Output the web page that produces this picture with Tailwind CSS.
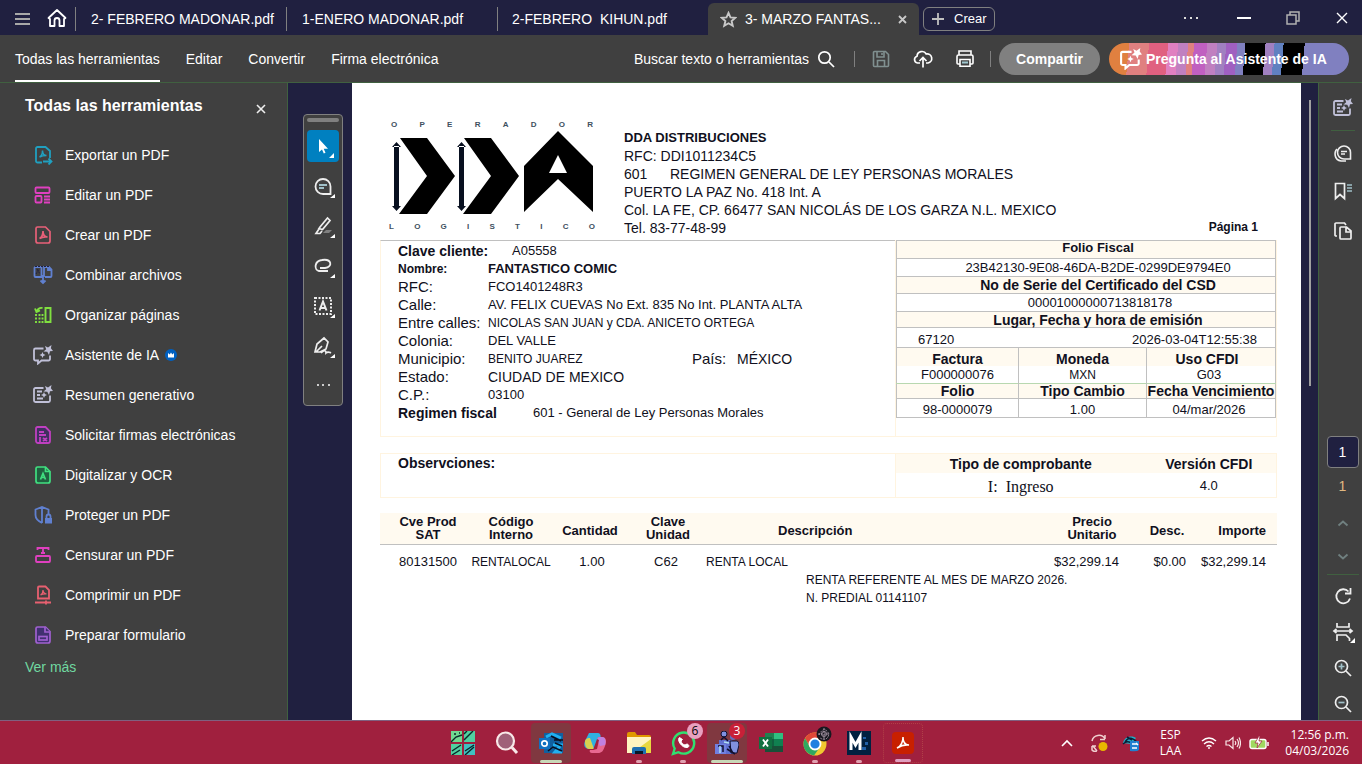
<!DOCTYPE html>
<html lang="es">
  <head>
    <meta charset="UTF-8" />
    <meta name="viewport" content="width=device-width, initial-scale=1.0" />
    <title>3- MARZO FANTASTICO.pdf</title>
    <script src="https://cdn.jsdelivr.net/npm/@tailwindcss/browser@4"></script>
  </head>
  <body
    class="h-screen flex flex-col overflow-hidden bg-[#202040] text-sm text-white font-['Liberation_Sans',Arial,sans-serif]"
  >
    <!-- shared icon shapes -->
    <svg class="hidden">
      <symbol id="page" viewBox="0 0 20 20">
        <path d="M4.500 2h8L17 6.500V16a2 2 0 0 1-2 2H5a2 2 0 0 1-2-2V3.500A1.500 1.500 0 0 1 4.500 2z" />
      </symbol>
      <symbol id="acro" viewBox="0 0 20 20">
        <path d="M6.500 13.500c2-1 3.500-4 3.500-7.500 0 4 2 6 4.500 6-3-.5-5.500 0-8 1.500z" />
      </symbol>
      <symbol id="spark" viewBox="0 0 20 20">
        <path d="m12 1 3 1.500L18.500 0l-.6 3.200L20 6l-3 .3L16 10l-1.700-3.200L10.500 6.500l2.700-2.300z" fill="currentColor" stroke="none" />
      </symbol>
      <symbol id="chat-ai" viewBox="0 0 20 20">
        <path d="M10.500 3.500h-8A1.500 1.500 0 0 0 1 5v9a1.500 1.500 0 0 0 1.500 1.500H5v3l3.500-3h7A1.500 1.500 0 0 0 17 14v-3.500" />
        <path d="m9.500 7 .9 2.100 2.100.9-2.100.9-.9 2.100-.9-2.100-2.100-.9 2.100-.9z" fill="currentColor" stroke="none" />
        <use href="#spark" />
      </symbol>
      <symbol id="summary-ai" viewBox="0 0 20 20">
        <path d="M10.500 3h-8A1.500 1.500 0 0 0 1 4.500v11A1.500 1.500 0 0 0 2.500 17h13a1.500 1.500 0 0 0 1.500-1.500v-5M4 6.500h5M4 10h3M4 13.500h6" />
        <path d="m11 7 .9 2.100 2.100.9-2.100.9-.9 2.100-.9-2.100L8 10l2.100-.9z" fill="currentColor" stroke="none" />
        <use href="#spark" />
      </symbol>
    </svg>

    <!-- window tabs -->
    <header class="h-[35px] shrink-0 flex items-end">
      <div class="w-[75px] h-full shrink-0 flex items-center gap-4 pl-[14px]">
        <button aria-label="Menú">
          <svg class="size-4" fill="none" stroke="#a8a8a8" stroke-width="2"><path d="M1 4h15M1 9h15M1 14h15" /></svg>
        </button>
        <button aria-label="Inicio">
          <svg class="size-[22px]" viewBox="0 0 22 22" fill="none" stroke="#fff" stroke-width="1.800" stroke-linejoin="round"><path d="M2.500 11 11 3l8.500 8-1.500 1v7h-4.500v-5.500a2 2 0 0 0-5 0V19H4v-7z" /></svg>
        </button>
      </div>
      <nav class="h-full flex items-end">
        <button class="w-[211px] h-full flex items-center pt-0.5"><span class="h-6 w-px bg-[#808080] mr-[15px]"></span>2- FEBRERO MADONAR.pdf</button>
        <button class="w-[211px] h-full flex items-center pt-0.5"><span class="h-6 w-px bg-[#808080] mr-[15px]"></span>1-ENERO MADONAR.pdf</button>
        <button class="w-[211px] h-full flex items-center pt-0.5"><span class="h-6 w-px bg-[#808080] mr-[14px]"></span>2-FEBRERO&nbsp; KIHUN.pdf</button>
        <div class="w-[211px] h-8 flex items-center rounded-t-md bg-[#404040] pl-3 pr-3">
          <svg class="size-[17px] mr-2" viewBox="0 0 18 18" fill="none" stroke="#c8c8c8" stroke-width="2"><path d="m9 2 2.100 4.700 5 .5-3.800 3.400 1.200 5L9 13l-4.500 2.600 1.200-5L1.900 7.200l5-.5z" /></svg>
          <span class="whitespace-nowrap">3- MARZO FANTAS...</span>
          <button class="ml-auto" aria-label="Cerrar pestaña">
            <svg class="size-[9px]" stroke="#c8c8c8" stroke-width="1.800"><path d="m1 1 7 7M8 1 1 8" /></svg>
          </button>
        </div>
      </nav>
      <button class="ml-1 mb-1 h-6 flex items-center gap-[10px] rounded-md border border-[#808080] pl-2 pr-[7px] text-[13px]">
        <svg class="size-3" stroke="#c0c0c0" stroke-width="1.800"><path d="M6 0v12M0 6h12" /></svg>
        Crear
      </button>
      <div class="ml-auto h-full flex items-center pr-[14px]">
        <button class="mr-[38px]" aria-label="Más"><svg class="w-4 h-1" fill="#ddd"><path d="M1 1h2v2H1zM7 1h2v2H7zM13 1h2v2h-2z" /></svg></button>
        <button class="mr-[35px]" aria-label="Minimizar"><svg class="w-[14px] h-[2px]"><path d="M0 0h14v2H0z" fill="#fff" /></svg></button>
        <button class="mr-[36px]" aria-label="Restaurar"><svg class="size-[14px]" fill="none" stroke="#b0b0b0" stroke-width="1.500"><path d="M1 4h9v9H1zM4 4V1h9v9h-3" /></svg></button>
        <button aria-label="Cerrar"><svg class="size-3" stroke="#fff" stroke-width="1.400"><path d="m1 1 10 10M11 1 1 11" /></svg></button>
      </div>
    </header>

    <!-- main menu bar -->
    <div class="h-12 shrink-0 flex items-center bg-[#404040] border-b border-[#406040] pl-[15px] pr-[13px]">
      <nav class="h-full flex gap-[26px]">
        <button class="border-y-2 border-t-transparent border-b-white">Todas las herramientas</button>
        <button>Editar</button>
        <button>Convertir</button>
        <button>Firma electrónica</button>
      </nav>
      <div class="ml-auto flex items-center">
        <button class="flex items-center gap-2">
          Buscar texto o herramientas
          <svg class="size-[18px]" fill="none" stroke="#fff" stroke-width="1.700"><circle cx="7.500" cy="7.500" r="5.700" /><path d="m12 12 5 5" /></svg>
        </button>
        <span class="w-px h-4 bg-[#808080] ml-[19px] mr-[17px]"></span>
        <button aria-label="Guardar">
          <svg class="size-[18px]" viewBox="0 0 18 18" fill="none" stroke="#809090" stroke-width="1.600"><path d="M1.500 2.500a1 1 0 0 1 1-1h11l3 3v11a1 1 0 0 1-1 1h-13a1 1 0 0 1-1-1zM5 1.500V7h7V1.500M5.500 16v-5.500h7V16M10 3v2" /></svg>
        </button>
        <button class="ml-[23px]" aria-label="Subir">
          <svg class="size-5" viewBox="0 0 20 20" fill="none" stroke="#fff" stroke-width="1.700"><path d="M7 14H4.500A3.500 3.500 0 0 1 4 7.200 5 5 0 0 1 13.300 5 4.500 4.500 0 0 1 15 14h-2M10 18.500V9M6.500 12 10 8.500l3.500 3.500" /></svg>
        </button>
        <button class="ml-[22px]" aria-label="Imprimir">
          <svg class="size-5" viewBox="0 0 20 20" fill="none" stroke="#fff" stroke-width="1.600"><path d="M4 6V2h12v4M5 15H3a1 1 0 0 1-1-1V7.500A1.500 1.500 0 0 1 3.500 6h13A1.500 1.500 0 0 1 18 7.500V14a1 1 0 0 1-1 1h-2" /><path d="M5 10.500h10v6.700H5z" /><path d="M7 13.500h6" stroke="#a0c8d0" stroke-width="2" /></svg>
        </button>
        <span class="w-px h-4 bg-[#808080] ml-[15px] mr-2"></span>
        <button class="h-8 rounded-full bg-[#808080] px-[17px] font-bold">Compartir</button>
        <button
          class="ml-[9px] w-[240px] h-8 flex items-center gap-1 whitespace-nowrap rounded-full pl-[11px] font-bold bg-[linear-gradient(95deg,#e08040_20px,#e08080_20px_40px,#e06080_40px_59px,#e080c0_59px_69px,#c080c0_69px_79px,#e08080_79px_85px,#c060c0_85px_98px,#c080c0_98px_108px,#a080c0_108px_117px,#a060c0_117px_128px,#8080c0_128px_136px,#000_136px_156px,#a080c0_156px_165px,#6080c0_165px_174px,#000_174px_195px,#8080c0_195px)]"
        >
          <svg class="size-[22px] shrink-0" viewBox="0 0 20 20" fill="none" stroke="currentColor" stroke-width="1.900"><use href="#chat-ai" /></svg>
          Pregunta al Asistente de IA
        </button>
      </div>
    </div>

    <main class="flex-1 min-h-0 flex">
      <!-- tool list -->
      <aside class="w-72 shrink-0 bg-[#404040] border-r border-[#406040]">
        <div class="h-[52px] flex justify-between pl-[25px] pr-[21px] pt-[13px]">
          <h2 class="text-base leading-5 font-bold">Todas las herramientas</h2>
          <button class="self-start mt-2" aria-label="Cerrar panel"><svg class="size-[10px]" stroke="#eee" stroke-width="1.600"><path d="m1 1 8 8M9 1 1 9" /></svg></button>
        </div>
        <ul>
          <li>
            <button class="h-10 flex items-center gap-3 pl-[33px]">
              <svg class="size-5" viewBox="0 0 20 20" fill="none" stroke="#20a0c0" stroke-width="1.800"><path d="M9 17.500H4.500A1.500 1.500 0 0 1 3 16V3.500A1.500 1.500 0 0 1 4.500 2h8L17 6v7M10 16.500h9M15.500 13.500l3 3-3 3" /><path d="M6.500 12c2-1 3-3.500 3-6.500 0 3.500 1.500 5 4 5-2.500 0-5 .5-7 1.500z" stroke-width="1.500" /></svg>
              Exportar un PDF
            </button>
          </li>
          <li>
            <button class="h-10 flex items-center gap-3 pl-[33px]">
              <svg class="size-5" viewBox="0 0 20 20" fill="none" stroke="#e040c0" stroke-width="1.800"><rect x="2.500" y="2.500" width="14" height="5.500" rx="1" /><rect x="2.500" y="11" width="6" height="6.500" rx="1" /><path d="M11 11.500h6M11 14.500h6M11 17.500h6" /></svg>
              Editar un PDF
            </button>
          </li>
          <li>
            <button class="h-10 flex items-center gap-3 pl-[33px]">
              <svg class="size-5" fill="none" stroke="#e86078" stroke-width="1.700"><use href="#page" /><use href="#acro" /></svg>
              Crear un PDF
            </button>
          </li>
          <li>
            <button class="h-10 flex items-center gap-3 pl-[33px]">
              <svg class="size-5" viewBox="0 0 20 20" fill="none" stroke="#6080d0" stroke-width="1.800"><path d="M7.500 12H2.500a1 1 0 0 1-1-1V3a1 1 0 0 1 1-1h6v10zM12 12h5.500a1 1 0 0 0 1-1V4.500L16 2h-5v10M10 10v8M7.500 15.500 10 18l2.500-2.500M15 2v3h3" /><path d="m3 9 3-5M4 4l3 5M2 1.500h15" stroke="#202040" stroke-width="1" stroke-dasharray="2 1" /></svg>
              Combinar archivos
            </button>
          </li>
          <li>
            <button class="h-10 flex items-center gap-3 pl-[33px]">
              <svg class="size-5" viewBox="0 0 20 20" fill="none" stroke="#80e040" stroke-width="1.900"><path d="M12.500 3h5v14h-5z" /><path d="M9.500 3C7 2.500 5 3.500 4 6M2 3.500 3.500 7 7 5.500" /><path d="M3 9v9M6.500 9v9M9.500 9v9" stroke-dasharray="2 1.500" /></svg>
              Organizar páginas
            </button>
          </li>
          <li>
            <button class="h-10 flex items-center gap-3 pl-[33px]">
              <svg class="size-5 text-[#c0c0d8]" fill="none" stroke="currentColor" stroke-width="1.800"><use href="#chat-ai" /></svg>
              Asistente de IA
              <svg class="size-3 -ml-1.5" viewBox="0 0 12 12"><circle cx="6" cy="6" r="6" fill="#0060c0" /><path d="m3 4 1.700 1.500L6 3.500l1.300 2L9 4v4.500H3z" fill="#fff" /></svg>
            </button>
          </li>
          <li>
            <button class="h-10 flex items-center gap-3 pl-[33px]">
              <svg class="size-5 text-[#c0c0d8]" fill="none" stroke="currentColor" stroke-width="1.800"><use href="#summary-ai" /></svg>
              Resumen generativo
            </button>
          </li>
          <li>
            <button class="h-10 flex items-center gap-3 pl-[33px]">
              <svg class="size-5" fill="#403060" stroke="#c040c0" stroke-width="1.800"><use href="#page" /><path d="M6 7h5M6 10h7M7 12v5M10 13l4 3M14 13l-4 3" /></svg>
              Solicitar firmas electrónicas
            </button>
          </li>
          <li>
            <button class="h-10 flex items-center gap-3 pl-[33px]">
              <svg class="size-5" fill="#206040" stroke="#40e080" stroke-width="1.700"><use href="#page" /><path d="M12.500 2v4.500H17M7.500 14.500l2.500-6 2.500 6M8.500 12.500h3" fill="none" /></svg>
              Digitalizar y OCR
            </button>
          </li>
          <li>
            <button class="h-10 flex items-center gap-3 pl-[33px]">
              <svg class="size-5" viewBox="0 0 20 20" fill="none" stroke="#6080d0" stroke-width="1.800"><path d="M9 18c-4-2-6.500-4-6.500-8V4.500L9 2l6.500 2.500V9M9 2v16" /><path d="M12 13h7v5.500h-7z" fill="#6080d0" stroke="none" /><path d="M13.500 13v-1.500a2 2 0 0 1 4 0V13" /></svg>
              Proteger un PDF
            </button>
          </li>
          <li>
            <button class="h-10 flex items-center gap-3 pl-[33px]">
              <svg class="size-5" viewBox="0 0 20 20" fill="none" stroke="#e040c0" stroke-width="1.800"><path d="M4.500 5V3h11v2M10 3v5M8 8h4" /><rect x="3" y="11" width="14" height="6" rx="1" /></svg>
              Censurar un PDF
            </button>
          </li>
          <li>
            <button class="h-10 flex items-center gap-3 pl-[33px]">
              <svg class="size-5" viewBox="0 0 20 20" fill="none" stroke="#e86070" stroke-width="1.800"><path d="M6 1.500h6.500L16 5v8.500H5V2.500a1 1 0 0 1 1-1zM2 17.500h16M13 15.500v4" /><path d="M7.500 10c1.500-.8 2.500-2.500 2.500-5 0 2.500 1.500 3.500 3.500 4-2-.3-4 0-6 1z" stroke-width="1.200" /></svg>
              Comprimir un PDF
            </button>
          </li>
          <li>
            <button class="h-10 flex items-center gap-3 pl-[33px]">
              <svg class="size-5" fill="#403070" stroke="#a060d0" stroke-width="1.700"><use href="#page" /><path d="M12 2v5h5" /><rect x="6" y="11.500" width="8" height="3.500" /></svg>
              Preparar formulario
            </button>
          </li>
        </ul>
        <a href="#" class="block pl-[25px] pt-0.5 text-[#70d8a0]">Ver más</a>
      </aside>

      <!-- document viewer -->
      <section class="flex-1 min-w-0 flex">
        <div class="w-16 shrink-0 pl-[15px] pt-[31px]">
          <div class="w-10 h-[292px] flex flex-col items-center rounded border border-[#808080] bg-[#404040] pt-[3px]">
            <span class="w-8 h-1 rounded-full bg-[#808080] mb-2"></span>
            <button class="size-8 mb-2 rounded-sm bg-[#0080c0]" aria-label="Seleccionar">
              <svg class="size-8" fill="#fff"><path d="M12 9v13l3-2.500 1.800 4 1.700-.8-1.800-4H21zM27 23v5h-5z" /></svg>
            </button>
            <button class="size-8 mb-2" aria-label="Comentar">
              <svg class="size-8" fill="none" stroke="#eee" stroke-width="1.800"><path d="M16 9a7.500 7.500 0 0 1 7.500 7.500V24H16a7.500 7.500 0 0 1 0-15z" /><path d="M12 15h8M12 18h5" stroke="#a0c0c8" stroke-width="2" /><path d="M28 24v4h-5z" fill="#fff" stroke="none" /></svg>
            </button>
            <button class="size-8 mb-2" aria-label="Resaltar">
              <svg class="size-8" fill="none" stroke="#eee" stroke-width="1.700"><path d="m13 17 7.500-9L23 10.500l-7.500 9-3.500-1zM12 19l-3 4.500h4l2-2.500" /><path d="M16 23h6l3-3h-6z" fill="#808080" stroke="none" /><path d="M28 24v4h-5z" fill="#fff" stroke="none" /></svg>
            </button>
            <button class="size-8 mb-2" aria-label="Dibujar">
              <svg class="size-8" fill="none" stroke="#eee" stroke-width="1.800"><path d="M21 21h-9c-5-1-5-10 3-11 10-1.500 11 7 3 8h-5" /><path d="M28 24v4h-5z" fill="#fff" stroke="none" /></svg>
            </button>
            <button class="size-8 mb-2" aria-label="Texto">
              <svg class="size-8" fill="none" stroke="#eee" stroke-width="2"><path d="M8 8h16v16H8z" stroke-dasharray="2 1.500" /><path d="m12.500 20.500 3.500-9 3.500 9M14 18h4" /><path d="M28 24v4h-5z" fill="#fff" stroke="none" /></svg>
            </button>
            <button class="size-8 mb-2" aria-label="Firmar">
              <svg class="size-8" fill="none" stroke="#eee" stroke-width="1.700"><path d="m8 22 2-8 7-6 4 4-2 7-6 3zM9 22l6-6M14 23c3-3 5-3 5 0 2-2 3-1 5 0" /><path d="M28 24v4h-5z" fill="#fff" stroke="none" /></svg>
            </button>
            <button aria-label="Más herramientas"><svg class="w-4 h-8" fill="#ccc"><path d="M2 14h2v2H2zM7 14h2v2H7zM13 14h2v2h-2z" /></svg></button>
          </div>
        </div>

        <article class="flex-1 min-w-0 bg-white text-[#101020] pl-7 pr-6">
          <div class="h-[157px] flex">
            <div class="w-[208px] ml-2 mt-[37px] text-[8px] leading-[10px] font-bold text-[#405060]">
              <div class="flex justify-between px-[3px]"><span>O</span><span>P</span><span>E</span><span>R</span><span>A</span><span>D</span><span>O</span><span>R</span></div>
              <svg class="w-[208px] h-[92px]" viewBox="0 10 208 92">
                <path d="M12 18h27l28 38-28 38H11l28-38zM76 18h27l28 38-28 38H75l28-38zM170 11l35 35v46l-35-33-34 33V46z" fill="#000" />
                <path d="m170 35-9 18h18z" fill="#fff" />
                <path d="M6 26h5v61H6zM8.500 22 4 27h9zM8.500 91 4 86h9zM71 26h5v61h-5zM73.500 22 69 27h9zM73.500 91 69 86h9z" fill="#081020" />
              </svg>
              <div class="flex justify-between pl-px pr-px"><span>L</span><span>O</span><span>G</span><span>I</span><span>S</span><span>T</span><span>I</span><span>C</span><span>O</span></div>
            </div>
            <div class="ml-7 mt-[46px] leading-[18px] whitespace-nowrap">
              <p class="text-[13px] leading-[18px] font-bold">DDA DISTRIBUCIONES</p>
              <p>RFC: DDI1011234C5</p>
              <p class="flex"><span class="w-[46px]">601</span>REGIMEN GENERAL DE LEY PERSONAS MORALES</p>
              <p>PUERTO LA PAZ No. 418 Int. A</p>
              <p>Col. LA FE, CP. 66477 SAN NICOLÁS DE LOS GARZA N.L. MEXICO</p>
              <p>Tel. 83-77-48-99</p>
            </div>
            <span class="ml-auto self-end pr-[19px] pb-[5px] text-xs font-bold whitespace-nowrap">Página 1</span>
          </div>

          <!-- customer + fiscal data -->
          <div class="h-[197px] flex border-b border-[#fff4e0]">
            <dl class="flex-1 grid grid-cols-[90px_1fr] auto-rows-[18px] content-start border-t border-t-[#c0c0c0] border-l border-l-[#fff4e0] pt-px pl-[17px] text-[13px] leading-[18px] whitespace-nowrap">
              <dt class="text-sm/[18px] font-bold">Clave cliente:</dt><dd class="pl-6">A05558</dd>
              <dt class="text-xs/[18px] font-bold">Nombre:</dt><dd class="font-bold">FANTASTICO COMIC</dd>
              <dt class="text-[15px]">RFC:</dt><dd>FCO1401248R3</dd>
              <dt class="text-[15px]">Calle:</dt><dd>AV. FELIX CUEVAS No Ext. 835 No Int. PLANTA ALTA</dd>
              <dt class="text-[15px]">Entre calles:</dt><dd class="text-xs/[18px]">NICOLAS SAN JUAN y CDA. ANICETO ORTEGA</dd>
              <dt class="text-[15px]">Colonia:</dt><dd>DEL VALLE</dd>
              <dt class="text-[15px]">Municipio:</dt>
              <dd class="flex text-xs/[18px]"><span class="w-[204px]">BENITO JUAREZ</span><span class="w-[45px] text-[15px]">País:</span><span class="text-sm/[18px]">MÉXICO</span></dd>
              <dt class="text-[15px]">Estado:</dt><dd class="text-sm/[18px]">CIUDAD DE MEXICO</dd>
              <dt class="text-[15px]">C.P.:</dt><dd>03100</dd>
              <dt class="text-sm/[18px] font-bold">Regimen fiscal</dt><dd class="pl-[45px]">601 - General de Ley Personas Morales</dd>
            </dl>
            <div class="w-[382px] border-x border-x-[#fff4e0]">
              <table class="w-full table-fixed border-collapse border border-[#c0c0c0] text-center text-[13px] leading-[14px] whitespace-nowrap">
                <colgroup><col class="w-[122px]" /><col class="w-[128px]" /><col /></colgroup>
                <tbody>
                  <tr class="h-[18px] bg-[#fffaf0]"><th colspan="3" class="p-0 pl-6 align-top">Folio Fiscal</th></tr>
                  <tr class="h-[18px] border-y border-[#c0c0c0]"><td colspan="3" class="p-0 pl-6">23B42130-9E08-46DA-B2DE-0299DE9794E0</td></tr>
                  <tr class="h-[17px] bg-[#fffaf0] text-sm/[14px]"><th colspan="3" class="p-0 pl-6">No de Serie del Certificado del CSD</th></tr>
                  <tr class="h-[18px] border-y border-[#c0c0c0]"><td colspan="3" class="p-0 pl-7">00001000000713818178</td></tr>
                  <tr class="h-4 bg-[#fffaf0] text-sm/[14px]"><th colspan="3" class="p-0 pl-6">Lugar, Fecha y hora de emisión</th></tr>
                  <tr class="h-[20px] border-y border-[#c0c0c0]"><td colspan="3" class="p-0"><div class="flex justify-between pl-[21px] pr-[18px] pt-1"><span>67120</span><span>2026-03-04T12:55:38</span></div></td></tr>
                  <tr class="h-[18px] bg-[#fffaf0] text-sm/[14px]"><th class="p-0 pt-1 border-r border-[#c0c0c0]">Factura</th><th class="p-0 pt-1 border-r border-[#c0c0c0]">Moneda</th><th class="p-0 pt-1 pr-2">Uso CFDI</th></tr>
                  <tr class="h-[17px] border-b border-[#b8d8b0]"><td class="p-0 pt-0.5 border-r border-[#c0c0c0]">F000000076</td><td class="p-0 pt-0.5 border-r border-[#c0c0c0] text-xs/[14px]">MXN</td><td class="p-0 pt-0.5 pr-1">G03</td></tr>
                  <tr class="h-[15px] bg-[#fffaf0] text-sm/[14px]"><th class="p-0 border-r border-[#c0c0c0]">Folio</th><th class="p-0 border-r border-[#c0c0c0]">Tipo Cambio</th><th class="p-0">Fecha Vencimiento</th></tr>
                  <tr class="h-[19px] border-y border-[#c0c0c0]"><td class="p-0 pt-1 border-r border-[#c0c0c0]">98-0000079</td><td class="p-0 pt-1 border-r border-[#c0c0c0]">1.00</td><td class="p-0 pt-1 pr-1">04/mar/2026</td></tr>
                </tbody>
              </table>
            </div>
          </div>

          <div class="mt-4 h-[45px] flex border border-[#fff4e0]">
            <p class="flex-1 pl-[17px] font-bold leading-[18px]">Observciones:</p>
            <table class="w-[381px] table-fixed border-l border-[#fff4e0] leading-[18px]">
              <colgroup><col class="w-[250px]" /><col /></colgroup>
              <tbody>
                <tr class="h-[19px] bg-[#fffaf0]"><th class="p-0">Tipo de comprobante</th><th class="p-0 pr-1">Versión CFDI</th></tr>
                <tr class="text-center"><td class="p-0 pt-1 text-base leading-5 font-['Liberation_Serif',serif]">I:&nbsp; Ingreso</td><td class="p-0 pt-0.5 pr-1 text-[13px]">4.0</td></tr>
              </tbody>
            </table>
          </div>

          <table class="mt-[15px] w-full table-fixed text-[13px] leading-[18px] whitespace-nowrap text-center">
            <colgroup>
              <col class="w-[88px]" /><col class="w-[86px]" /><col class="w-[72px]" /><col class="w-20" /><col /><col class="w-[76px]" /><col class="w-[70px]" /><col class="w-[77px]" />
            </colgroup>
            <thead>
              <tr class="h-[31px] border-b border-[#c0c0c0] bg-[#fffaf0] leading-[13px]">
                <th class="p-0 pl-2">Cve Prod<br />SAT</th>
                <th class="p-0">Código<br />Interno</th>
                <th class="p-0 pt-1">Cantidad</th>
                <th class="p-0 pl-1">Clave<br />Unidad</th>
                <th class="p-0 pt-1 pl-[72px] text-left">Descripción</th>
                <th class="p-0">Precio<br />Unitario</th>
                <th class="p-0 pt-1 pl-1">Desc.</th>
                <th class="p-0 pt-1 pr-[11px] text-right">Importe</th>
              </tr>
            </thead>
            <tbody>
              <tr class="align-bottom h-[27px]">
                <td class="p-0 pl-2">80131500</td>
                <td class="p-0 text-xs/[18px]">RENTALOCAL</td>
                <td class="p-0 pl-1">1.00</td>
                <td class="p-0">C62</td>
                <td class="p-0 text-left text-xs/[18px]">RENTA LOCAL</td>
                <td class="p-0 pr-3 text-right">$32,299.14</td>
                <td class="p-0 pr-[14px] text-right">$0.00</td>
                <td class="p-0 pr-[11px] text-right">$32,299.14</td>
              </tr>
              <tr>
                <td colspan="4"></td>
                <td colspan="4" class="p-0 pl-[100px] text-left text-xs/[18px]">RENTA REFERENTE AL MES DE MARZO 2026.<br />N. PREDIAL 01141107</td>
              </tr>
            </tbody>
          </table>
        </article>

        <div class="w-[17px] shrink-0 pl-2 pt-[17px]"><div class="w-[2px] h-[286px] bg-[#a0a0a0]"></div></div>
      </section>

      <!-- right rail -->
      <aside class="w-11 shrink-0 flex flex-col items-center bg-[#404040] border-l border-[#406040] pt-[15px] pl-1">
        <button aria-label="Resumen"><svg class="size-5 text-[#c0c0d8]" fill="none" stroke="currentColor" stroke-width="1.800"><use href="#summary-ai" /></svg></button>
        <span class="w-6 h-px shrink-0 bg-[#406040] mt-3"></span>
        <button class="mt-3" aria-label="Comentarios">
          <svg class="size-5" viewBox="0 0 20 20" fill="none" stroke="#eee" stroke-width="1.600"><path d="M11 3a6.500 6.500 0 0 1 6.500 6.500V16H11a6.500 6.500 0 0 1 0-13zM8 8.500h6M8 11h4" /><path d="M4 6c-3 3-3 11 4 12h5" /></svg>
        </button>
        <button class="mt-[18px]" aria-label="Marcadores">
          <svg class="size-5" viewBox="0 0 20 20" fill="none" stroke="#eee" stroke-width="1.700"><path d="M2.500 2.500h9v15L7 13.500l-4.500 4z" /><path d="M14 4h5M14 7h5M14 10h5" stroke="#a0c0c8" /></svg>
        </button>
        <button class="mt-5" aria-label="Páginas">
          <svg class="size-5" viewBox="0 0 20 20" fill="none" stroke="#eee" stroke-width="1.700"><path d="M8 6h5.500L18 10v7a1 1 0 0 1-1 1H8a1 1 0 0 1-1-1V7a1 1 0 0 1 1-1zM13 6v5h5M4 15H3a1 1 0 0 1-1-1V3a1 1 0 0 1 1-1h8.500l1.500 2" /></svg>
        </button>
        <div class="mt-auto flex flex-col items-center">
          <input aria-label="Página" value="1" class="w-8 h-8 rounded border border-[#808080] bg-[#202040] text-center" />
          <span class="mt-2 text-[#e0b880]">1</span>
          <button class="mt-[22px]" aria-label="Página anterior"><svg class="w-3 h-[10px]" fill="none" stroke="#708080" stroke-width="1.800"><path d="m1.500 7.500 4.500-4 4.500 4" /></svg></button>
          <button class="mt-6" aria-label="Página siguiente"><svg class="w-3 h-[10px]" fill="none" stroke="#708080" stroke-width="1.800"><path d="m1.500 2.500 4.500 4 4.500-4" /></svg></button>
          <span class="w-8 h-px bg-[#406040] mt-3"></span>
          <button class="mt-[11px]" aria-label="Girar"><svg class="size-5" fill="none" stroke="#eee" stroke-width="1.800"><path d="M15.500 5.500a7 7 0 1 0 1.500 7M17.500 2v5.500H12" /></svg></button>
          <button class="mt-4" aria-label="Ajustar">
            <svg class="size-5 overflow-visible" fill="none" stroke="#eee" stroke-width="1.700"><path d="M4 1v4h12V1M4 19v-6h9l3.500 3.500V19M1 9h18M3.500 7 1 9l2.500 2M16.500 7 19 9l-2.500 2" /><path d="M22 16v5h-5z" fill="#fff" stroke="none" /></svg>
          </button>
          <button class="mt-4" aria-label="Acercar"><svg class="size-5" fill="none" stroke="#eee" stroke-width="1.700"><circle cx="8.500" cy="8.500" r="6" /><path d="m13 13 5 5" /><path d="M5.500 8.500h6M8.500 5.500v6" stroke="#a0c0c8" /></svg></button>
          <button class="mt-4 mb-1.5" aria-label="Alejar"><svg class="size-5" fill="none" stroke="#eee" stroke-width="1.700"><circle cx="8.500" cy="8.500" r="6" /><path d="m13 13 5 5" /><path d="M5.500 8.500h6" stroke="#a0c0c8" /></svg></button>
        </div>
      </aside>
    </main>

    <!-- taskbar -->
    <footer class="h-11 shrink-0 grid grid-cols-[1fr_auto_1fr] items-center bg-[#a0203e] border-t border-[#806080] font-['Open_Sans',sans-serif]">
      <div></div>
      <div class="flex gap-1 pl-1">
        <button class="size-10 flex items-center justify-center" aria-label="Inicio de Windows">
          <svg class="size-6"><path d="M0 0h11v11H0z" fill="#70d890" /><path d="M13 0h11v11H13zM0 13h11v11H0z" fill="#50d0a0" /><path d="M13 13h11v11H13z" fill="#40c0c0" /><path d="m0 11 5-5 6-2M13 9l9-9M3 3h2M8 2h1M13 3l3-3M1 20l9-6M14 20l9-6M14 24l9-8M1 24l8-5" stroke="#082828" stroke-width="1.400" fill="none" /></svg>
        </button>
        <button class="size-10 flex items-center justify-center" aria-label="Buscar">
          <svg class="size-6" fill="#a06078" stroke="#f8e8e8" stroke-width="2.200"><circle cx="10.500" cy="10" r="8.500" /><path d="m17 16.500 5 5.500" stroke-width="3" /></svg>
        </button>
        <button class="relative size-10 flex items-center justify-center rounded bg-[#803840]" aria-label="Outlook">
          <svg class="size-6"><path d="M5 2h19v20H5z" fill="#1060a0" /><path d="m7 6 6-3 9 4M14 14h8l-6 7h7" fill="none" stroke="#20b0f0" stroke-width="3" /><path d="M15 9h9M9 20l5-4 9 4M12 5l10 5M16 12l7 3" stroke="#081020" stroke-width="1.500" fill="none" /><path d="M0 7h11v11H0z" fill="#1070c0" /><circle cx="5.500" cy="12.500" r="2.700" fill="none" stroke="#fff" stroke-width="1.700" /></svg>
          <span class="absolute bottom-0 w-[22px] h-[3px] rounded-full bg-[#c8d8b8]"></span>
        </button>
        <button class="size-10 flex items-center justify-center" aria-label="Copilot">
          <svg class="size-6"><path d="M6 2h9c3 0 3 4 2 7l-3 9H7C2 18 0 15 2 10z" fill="#30b0e0" /><path d="M2 11c0-3 2-4 5-4l4 11H6c-3 0-4-4-4-7z" fill="#d8d050" /><path d="M15 6h4c4 0 5 4 3 9s-3 7-7 7H9c-2 0-3-2-2-3h3c2 0 3-6 5-13z" fill="#e86890" /><path d="M14 9c1-3 3-3 5-3 4 0 4 5 3 8l-5 1z" fill="#c080e0" /><path d="m10 19 4-11 2 1-2 9z" fill="#a0203e" /></svg>
        </button>
        <button class="relative size-10 flex items-center justify-center" aria-label="Explorador">
          <svg class="size-6"><path d="M0 3q0-2 2-2h6l2 3h12q2 0 2 2v3H0z" fill="#e09800" /><path d="M0 6h24v16H0z" fill="#fff4c0" /><path d="M24 8v14H5z" fill="#e8d840" /><path d="M5 23v-5q0-2 2-2h10q2 0 2 2v5z" fill="#2070b0" /><path d="M8 23v-3h8v3z" fill="#081828" /></svg>
          <span class="absolute bottom-0 w-[6px] h-[3px] rounded-full bg-[#e0a0b0]"></span>
        </button>
        <button class="relative size-10 flex items-center justify-center" aria-label="WhatsApp">
          <svg class="size-[26px]" fill="none" stroke="#30e070" stroke-width="2.400"><path d="m3 24 1.700-5.500a10.500 10.500 0 1 1 3.800 3.700z" /><path d="M9.500 7.500c-3 2 2 10.500 7.500 10 3-.5 2-3 0-3.500l-2 1c-2-.5-3.500-2-4-4l1.500-1.500z" fill="#fff" stroke="#fff" stroke-width="1" /></svg>
          <span class="absolute top-1 right-1 size-4 translate-x-1 -translate-y-1 rounded-full bg-[#e8a0c0] text-xs/4 text-black text-center">6</span>
          <span class="absolute bottom-0 w-[6px] h-[3px] rounded-full bg-[#e0a0b0]"></span>
        </button>
        <button class="relative size-10 flex items-center justify-center rounded bg-[#803840]" aria-label="Teams">
          <svg class="size-6"><circle cx="9" cy="3" r="3" fill="#8090e0" stroke="#101030" /><circle cx="18" cy="6" r="3" fill="#6070c0" /><path d="M4 9h12q2 0 2 3v11H4z" fill="#6070d0" /><path d="M15 10h7q2 0 2 4l-2 8h-6z" fill="#8090e0" stroke="#101030" /><path d="M0 13h11v10H0z" fill="#7080e0" /><path d="m6 9 3-3 4 4M3 15h5v6M14 15l4 7M12 18l8 5" stroke="#101030" stroke-width="1.500" fill="none" /><path d="M5 15v7M9 11l5 1" stroke="#b0e0f0" stroke-width="1.500" /></svg>
          <span class="absolute top-0 right-0.5 size-4 rounded-full bg-[#c82038] text-xs/4 text-white text-center">3</span>
          <span class="absolute bottom-0 w-[32px] h-[3px] rounded-full bg-[#c8d8b8]"></span>
        </button>
        <button class="size-10 flex items-center justify-center" aria-label="Excel">
          <svg class="size-6"><path d="M6 2h9v19H6z" fill="#208050" /><path d="M15 2h9v6h-9z" fill="#30c080" /><path d="M6 8h9v7H6z" fill="#106040" /><path d="M15 8h9v7h-9z" fill="#108050" /><path d="M6 15h18v6H6z" fill="#185038" /><path d="M0 6h13v12H0z" fill="#107040" /><path d="m4 8.500 5 7M9 8.500l-5 7" stroke="#fff" stroke-width="1.900" /></svg>
        </button>
        <button class="relative size-10 flex items-center justify-center" aria-label="Chrome">
          <svg class="size-[26px] overflow-visible"><circle cx="13" cy="14" r="11.500" fill="#f0c830" /><path d="M3 8.300A11.500 11.500 0 0 1 23 8.300H13L8 17z" fill="#e04838" /><path d="M3 8.300A11.500 11.500 0 0 0 12 25.500l6-8.500-10 0z" fill="#30a860" /><circle cx="13" cy="14" r="5.500" fill="#2080e0" stroke="#fff" stroke-width="1.800" /><circle cx="22" cy="4" r="7.500" fill="#181820" /><path d="M17 5q5-10 10-1-2 8-9 4M22-2v12M16 4h12" fill="none" stroke="#a090a0" stroke-dasharray="2 1" /><circle cx="22" cy="4" r="2.500" fill="none" stroke="#a090a0" /></svg>
          <span class="absolute bottom-0 w-[6px] h-[3px] rounded-full bg-[#e0a0b0]"></span>
        </button>
        <button class="relative size-10 flex items-center justify-center" aria-label="Aplicación M">
          <svg class="size-6"><path d="M0 0h24v24H0z" fill="#002040" /><path d="M4 19V6l4.500 8L13 6v13" fill="none" stroke="#fff" stroke-width="3" /><path d="M16 6h3v2h-3zM18 11h3v3h-3zM15 16h4v3h-4z" fill="#2060a8" /></svg>
          <span class="absolute bottom-0 w-[6px] h-[3px] rounded-full bg-[#e0a0b0]"></span>
        </button>
        <button class="relative size-10 flex items-center justify-center rounded border border-dotted border-[#b04048]" aria-label="Acrobat">
          <svg class="size-[22px]"><rect width="22" height="22" rx="4" fill="#c82000" /><path d="M5 16c3-1.500 6-5.500 6-11 0 5.500 2.500 8 6 8-4-.5-8 .5-12 3z" fill="none" stroke="#fff" stroke-width="1.500" /></svg>
          <span class="absolute bottom-0 w-4 h-[3px] rounded-full bg-[#e0a0c0]"></span>
        </button>
      </div>
      <div class="justify-self-end flex items-center pr-[13px] text-xs/4">
        <button aria-label="Iconos ocultos"><svg class="w-3 h-2" fill="none" stroke="#fff" stroke-width="1.600"><path d="m1 7 5-5 5 5" /></svg></button>
        <svg class="ml-[17px] size-[18px]" fill="none" stroke="#f0d0d0" stroke-width="1.500"><path d="M2 7A7 7 0 0 1 15 5V1M15 5.500h-5M2 12h4M2 12v4q2 2 5 1.500M3 12l4 5" /><circle cx="13" cy="12.500" r="4.500" fill="#e8b800" stroke="none" /></svg>
        <svg class="ml-[14px] size-[18px]"><path d="M1 9c1-7 10-8 13-5l-5 6z" fill="#20b0c8" /><path d="M3 8c4-6 8-4 12 0M1 10q4-4 8-1M5 3l5 3" fill="none" stroke="#082038" stroke-width="1.500" /><path d="M8 7h9v9q-2 2-9 1z" fill="#2080d0" /><path d="M10 10h5M10 14h5M14 9l2 2" stroke="#fff" stroke-width="1.500" /></svg>
        <span class="ml-5 text-center">ESP<br />LAA</span>
        <svg class="ml-5 w-4 h-3" fill="none" stroke="#fff" stroke-width="1.400"><path d="M1 4q7-6 14 0M3 7q5-4.500 10 0M5.500 9.500q2.500-2 5 0M8 10v2" /></svg>
        <svg class="ml-2 w-4 h-[14px]" fill="none" stroke="#f8e8e8" stroke-width="1.200"><path d="M1 5h3l4-3.500v11L4 9H1zM10 5q1.500 2 0 4M12 3q3 4 0 8M14 1.500q3 5.500 0 11" /></svg>
        <svg class="ml-2 w-5 h-[14px]"><rect x="1" y="3.500" width="16" height="9" rx="2" fill="#a0d860" stroke="#fff" stroke-width="1.400" /><path d="M19 6v4" stroke="#fff" stroke-width="1.500" /><path d="m10 0-4 7h3l-1 5 5-7h-3l1-5z" fill="#fff" stroke="#a0203e" stroke-width=".7" /></svg>
        <span class="ml-4 text-right whitespace-nowrap">12:56 p.m.<br />04/03/2026</span>
      </div>
    </footer>
  </body>
</html>
